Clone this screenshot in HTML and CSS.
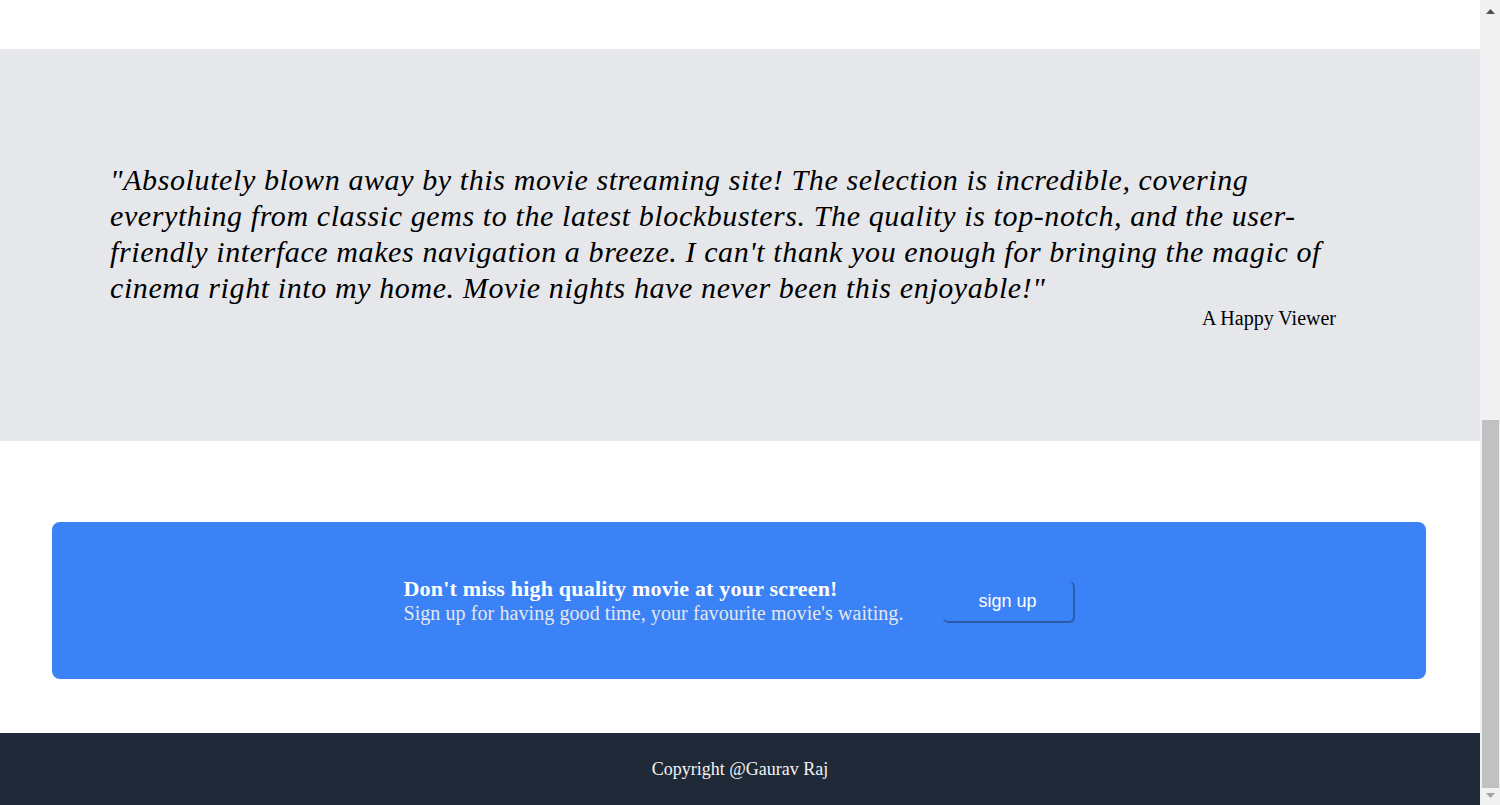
FILE: index.html
```html
<!DOCTYPE html>
<html lang="en">
<head>
<meta charset="utf-8">
<title>Movies</title>
<link rel="stylesheet" href="styles.css">
</head>
<body>
<div class="page">
  <div class="page-top"></div>
  <section class="testimonial">
    <blockquote class="quote">"Absolutely blown away by this movie streaming site! The selection is incredible, covering everything from classic gems to the latest blockbusters. The quality is top-notch, and the user-friendly interface makes navigation a breeze. I can't thank you enough for bringing the magic of cinema right into my home. Movie nights have never been this enjoyable!"</blockquote>
    <p class="author">A Happy Viewer</p>
  </section>
  <section class="cta-wrap">
    <div class="cta">
      <div class="cta-text">
        <h2 class="cta-title">Don't miss high quality movie at your screen!</h2>
        <p class="cta-sub">Sign up for having good time, your favourite movie's waiting.</p>
      </div>
      <button class="cta-btn" type="button">sign up</button>
    </div>
  </section>
  <footer class="footer">Copyright @Gaurav Raj</footer>
</div>
<div class="scrollbar" aria-hidden="true">
  <div class="sb-btn">
    <svg width="20" height="17" viewBox="0 0 20 17"><polygon points="6,14 15,14 10.5,9" fill="#505050"/></svg>
  </div>
  <div class="sb-track"><div class="sb-thumb"></div></div>
  <div class="sb-btn">
    <svg width="20" height="17" viewBox="0 0 20 17"><polygon points="6,5 15,5 10.5,10" fill="#a3a3a3"/></svg>
  </div>
</div>
<script src="script.js"></script>
</body>
</html>
```
FILE: styles.css
```css
* { box-sizing: border-box; }
html, body { margin: 0; padding: 0; }
body {
  font-family: "Liberation Serif", "Times New Roman", serif;
  color: #000;
  background: #fff;
}
.page { margin-right: 20px; }
.page-top { height: 935px; }
.testimonial {
  background: #e5e7eb;
  padding: 113px 144px 111px 110px;
}
.quote {
  margin: 0;
  font-size: 30px;
  line-height: 36px;
  font-style: italic;
  letter-spacing: 0.6px;
}
.author {
  margin: 0;
  text-align: right;
  font-size: 20px;
  line-height: 24px;
}
.cta-wrap { padding: 81px 54px 54px 52px; }
.cta {
  background: #3b82f6;
  border-radius: 8px;
  height: 157px;
  display: flex;
  align-items: center;
  justify-content: center;
  gap: 39px;
}
.cta-title {
  margin: 0;
  color: #fff;
  font-size: 22px;
  line-height: 24px;
  font-weight: bold;
  letter-spacing: 0.2px;
}
.cta-sub {
  margin: 0;
  color: #e5e7eb;
  font-size: 20px;
  line-height: 24px;
  letter-spacing: 0.08px;
}
.cta-btn {
  font-family: "Liberation Sans", Arial, sans-serif;
  font-size: 18px;
  line-height: 24px;
  color: #fff;
  background: transparent;
  border: 0;
  border-right: 2px solid #2c5aa8;
  border-bottom: 2px solid #2c5aa8;
  border-radius: 6px;
  width: 132px;
  height: 42px;
  padding: 0;
  margin-top: 2px;
}
.footer {
  background: #1f2937;
  color: #f3f4f6;
  height: 72px;
  display: flex;
  align-items: center;
  justify-content: center;
  font-size: 18px;
}
.scrollbar {
  position: fixed;
  top: 0;
  right: 0;
  width: 20px;
  height: 100vh;
  background: #f1f1f1;
  display: flex;
  flex-direction: column;
}
.sb-btn { height: 17px; flex: none; }
.sb-btn svg { display: block; }
.sb-track {
  flex: 1;
  display: flex;
  flex-direction: column;
  justify-content: flex-end;
}
.sb-thumb {
  height: 368px;
  margin: 0 1px 0 2px;
  background: #c1c1c1;
}
```
FILE: script.js
```js
window.scrollTo(0, document.documentElement.scrollHeight);
window.addEventListener('load', function () {
  window.scrollTo(0, document.documentElement.scrollHeight);
});
```
